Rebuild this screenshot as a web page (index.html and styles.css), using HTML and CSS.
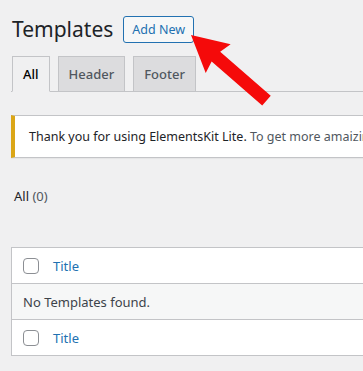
FILE: index.html
```html
<!DOCTYPE html>
<html lang="en">

<head>
    <meta charset="UTF-8">
    <meta name="viewport" content="width=device-width, initial-scale=1.0">
    <title>Templates</title>
    <link rel="stylesheet" href="styles.css">
</head>

<body>

    <div class="wrap">
        <div class="page-head">
            <h1>Templates</h1>
            <a class="add-new" href="#">Add New</a>
        </div>

        <nav class="tabs">
            <a class="tab active" href="#">All</a>
            <a class="tab" href="#">Header</a>
            <a class="tab" href="#">Footer</a>
        </nav>

        <div class="notice">
            <p><span class="strong">Thank you for using ElementsKit Lite.</span> To get more amaizing features and the outstanding pro ready-made layouts, please get the Premium Version.</p>
        </div>

        <ul class="filters">
            <li class="current">All <span class="count">(0)</span></li>
        </ul>

        <table class="list">
            <thead>
                <tr>
                    <td class="check"><span class="box"></span></td>
                    <th><a href="#">Title</a></th>
                </tr>
            </thead>
            <tbody>
                <tr class="empty">
                    <td colspan="2">No Templates found.</td>
                </tr>
            </tbody>
            <tfoot>
                <tr>
                    <td class="check"><span class="box"></span></td>
                    <th><a href="#">Title</a></th>
                </tr>
            </tfoot>
        </table>
    </div>

    <!-- red pointer drawn over the page -->
    <svg class="arrow" width="363" height="371" viewBox="0 0 363 371">
        <polygon points="0,0 36,-19 33,-6.5 100,-6.5 100,6.5 33,6.5 36,19" fill="#f50a0a" transform="translate(191,35) rotate(41)"/>
    </svg>

</body>

</html>
```

FILE: styles.css
```css
body {
    background-color: #f0f0f1;
    color: #3c434a;
    font-family: "Noto Sans", "Open Sans", sans-serif;
    font-size: 13px;
    margin: 0;
    padding: 0;
    overflow: hidden;
    width: 363px;
    height: 371px;
    position: relative;
}

.wrap {
    width: 1100px;
    padding-left: 11px;
}

.page-head {
    display: flex;
    align-items: center;
    padding-top: 14px;
}

h1 {
    font-size: 21px;
    font-weight: 400;
    line-height: 30px;
    color: #1d2327;
    margin: 0 10px 0 1px;
}

.add-new {
    display: inline-block;
    border: 1px solid #2271b1;
    border-radius: 3px;
    background-color: #f6f7f7;
    color: #2271b1;
    text-decoration: none;
    font-size: 12.5px;
    line-height: 25px;
    padding: 0 8px;
}

.tabs {
    display: flex;
    gap: 8px;
    margin-top: 12px;
    padding-left: 1px;
    border-bottom: 1px solid #c3c4c7;
}

.tab {
    display: block;
    font-size: 13px;
    font-weight: 500;
    line-height: 24px;
    padding: 5px 10px;
    margin-bottom: -1px;
    border: 1px solid #c3c4c7;
    background-color: #dcdcde;
    color: #50575e;
    text-decoration: none;
}

.tab.active {
    background-color: #f0f0f1;
    border-bottom-color: #f0f0f1;
    color: #000;
}

.notice {
    margin-top: 23px;
    background-color: #fff;
    border: 1px solid #c3c4c7;
    border-left: 4px solid #dba617;
    box-shadow: 0 1px 1px rgba(0, 0, 0, 0.04);
    padding: 0 14px;
    white-space: nowrap;
}

.notice p {
    margin: 0;
    line-height: 41px;
    font-size: 12.5px;
    color: #50575e;
}

.notice .strong {
    color: #1d2327;
}

.filters {
    list-style: none;
    margin: 27px 0 0 3px;
    padding: 0;
    line-height: 22px;
}

.filters .current {
    color: #1d2327;
}

.filters .count {
    color: #50575e;
}

.list {
    margin-top: 40px;
    width: 100%;
    border-collapse: collapse;
    background-color: #fff;
    border: 1px solid #c3c4c7;
}

.list td,
.list th {
    height: 35px;
    padding: 0 0 0 11px;
    text-align: left;
    font-weight: 400;
    vertical-align: middle;
}

.list thead tr {
    border-bottom: 1px solid #c3c4c7;
}

.list tfoot tr {
    border-top: 1px solid #c3c4c7;
}

.list .check {
    width: 16px;
}

.list th {
    padding-left: 14px;
}

.list th a {
    color: #2271b1;
    text-decoration: none;
    font-size: 13px;
}

.box {
    display: block;
    width: 14px;
    height: 14px;
    border: 1px solid #8c8f94;
    border-radius: 4px;
    background-color: #fff;
}

.empty td {
    background-color: #f6f7f7;
    color: #3c434a;
}

.arrow {
    position: absolute;
    left: 0;
    top: 0;
    pointer-events: none;
}
```
